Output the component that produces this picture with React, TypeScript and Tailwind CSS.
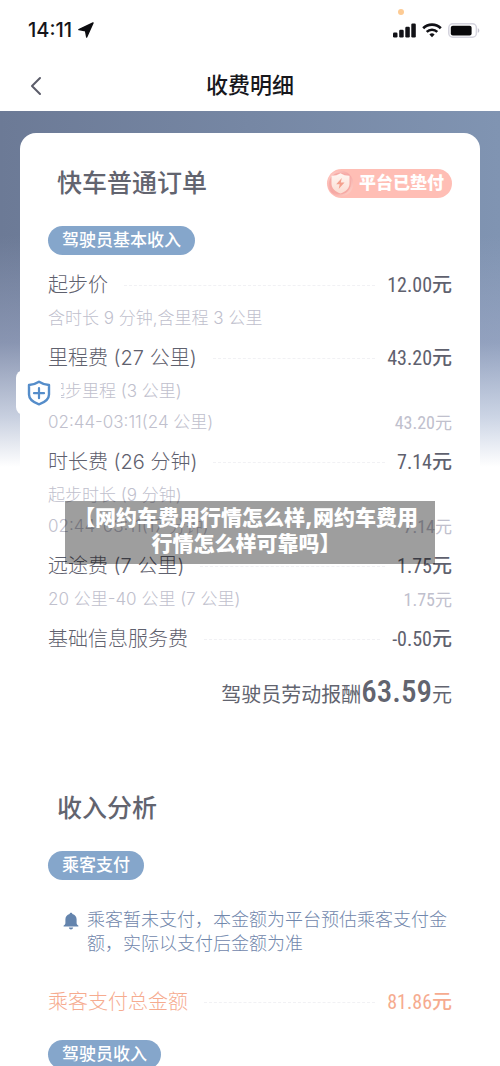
import { ChevronLeft } from "lucide-react";

interface FeeItem {
  label: string;
  amount: string;
  details: { text: string; amount?: string }[];
}

const FEES: FeeItem[] = [
  {
    label: "起步价",
    amount: "12.00",
    details: [{ text: "含时长 9 分钟,含里程 3 公里" }],
  },
  {
    label: "里程费 (27 公里)",
    amount: "43.20",
    details: [
      { text: "起步里程 (3 公里)" },
      { text: "02:44-03:11(24 公里)", amount: "43.20" },
    ],
  },
  {
    label: "时长费 (26 分钟)",
    amount: "7.14",
    details: [
      { text: "起步时长 (9 分钟)" },
      { text: "02:44-03:11(17 分钟)", amount: "7.14" },
    ],
  },
  {
    label: "远途费 (7 公里)",
    amount: "1.75",
    details: [{ text: "20 公里-40 公里 (7 公里)", amount: "1.75" }],
  },
  { label: "基础信息服务费", amount: "-0.50", details: [] },
];

function StatusBar() {
  return (
    <div className="flex h-[60px] items-center justify-between pl-7 pr-5">
      <div className="flex items-center gap-[6px]">
        <span className="text-[20px] font-medium leading-6 text-[#15151a]">14:11</span>
        <svg viewBox="0 0 16 16" className="h-4 w-4" fill="#0c0c10" stroke="#0c0c10" aria-hidden="true">
          <path d="M15 1 .9 7.600l6.600 1.100L8.700 15Z" strokeWidth="1.400" strokeLinejoin="round" />
        </svg>
      </div>
      <div className="relative flex items-center gap-[6px]">
        <span className="absolute -top-[14px] left-[5px] h-[6px] w-[6px] rounded-full bg-[#fdcb94]" />
        <svg viewBox="0 0 23 15" className="h-[15px] w-[23px]" fill="#111116" aria-hidden="true">
          <rect x="0" y="9.500" width="4.500" height="5" rx="1.200" />
          <rect x="6.200" y="6.700" width="4.500" height="7.800" rx="1.200" />
          <rect x="12.300" y="3.800" width="4.500" height="10.700" rx="1.200" />
          <rect x="18.300" y=".5" width="4.500" height="14" rx="1.200" />
        </svg>
        <svg viewBox="0 0 20 15" className="h-[15px] w-[20px]" fill="none" stroke="#111116" aria-hidden="true">
          <path d="M1.200 5.200a12.500 12.500 0 0 1 17.600 0" strokeWidth="2.700" />
          <path d="M4.700 8.900a7.500 7.500 0 0 1 10.600 0" strokeWidth="2.500" />
          <path d="M10 14.200 7.400 11.600a3.700 3.700 0 0 1 5.200 0Z" fill="#111116" stroke="none" />
        </svg>
        <svg viewBox="0 0 32 15" className="h-[15px] w-8" aria-hidden="true">
          <rect x=".8" y=".8" width="27.600" height="13.400" rx="4" fill="#fff" stroke="#d4d3dd" strokeWidth="1.500" />
          <rect x="2.800" y="2.700" width="20.800" height="9.700" rx="2" fill="#08080a" />
          <path d="M29.800 5.200c2 .6 2 4 0 4.600Z" fill="#c5c4d0" />
        </svg>
      </div>
    </div>
  );
}

function Pill({ children }: { children: string }) {
  return (
    <h3 className="w-fit rounded-full bg-[#85a6cb] px-[14px] text-[17px] font-medium leading-[29px] text-white">
      {children}
    </h3>
  );
}

function Leader() {
  return <span className="ml-4 mr-3 flex-1 border-t border-dashed border-[#f1f1f4]" />;
}

function MainRow({ label, amount }: { label: string; amount: string }) {
  return (
    <div className="flex h-9 items-center text-[20px]">
      <span className="font-light">{label}</span>
      <Leader />
      <span>
        <span className="font-['Roboto_Condensed',Roboto,sans-serif]">{amount}</span>
        <span className="font-medium">元</span>
      </span>
    </div>
  );
}

function FeeGroup({ item }: { item: FeeItem }) {
  return (
    <li className="text-[#5f616e]">
      <MainRow label={item.label} amount={item.amount} />
      {item.details.map((detail) => (
        <div
          key={detail.text}
          className="flex h-[31px] items-center justify-between text-[17px] text-[#c0c0cd]"
        >
          <span className="font-light">{detail.text}</span>
          {detail.amount && (
            <span>
              <span className="font-['Roboto_Condensed',Roboto,sans-serif] text-[18px]">{detail.amount}</span>元
            </span>
          )}
        </div>
      ))}
    </li>
  );
}

function AdvanceBadge() {
  return (
    <div className="flex h-[29px] items-center gap-1 rounded-full bg-[#ffbeb5] pr-2">
      <svg viewBox="0 0 28 29" className="h-[29px] w-7" aria-hidden="true">
        <defs>
          <linearGradient id="badge-ring" x1="0" y1="0" x2="1" y2="1">
            <stop offset="0" stopColor="#ffd5ce" />
            <stop offset=".5" stopColor="#f5a6a4" />
            <stop offset="1" stopColor="#ffd9cf" />
          </linearGradient>
          <linearGradient id="badge-shield" x1="0" y1="0" x2="0" y2="1">
            <stop offset="0" stopColor="#fff6f2" />
            <stop offset="1" stopColor="#fbdcd2" />
          </linearGradient>
        </defs>
        <circle cx="13.500" cy="14.500" r="12.800" fill="url(#badge-ring)" />
        <circle cx="13" cy="14.500" r="10.800" fill="#f6aaa4" />
        <path
          d="M13.500 4.200c2.500 1.700 5.500 2.500 9 2.500v8c0 4.500-3.500 7.600-9 9.900-5.500-2.300-9-5.400-9-9.900v-8c3.500 0 6.500-.8 9-2.500Z"
          fill="url(#badge-shield)"
        />
        <path d="m14.800 9-5.600 6.200h3.500l-1 4.800 5.800-6.400h-3.700Z" fill="#f4a08d" />
      </svg>
      <span className="text-[17px] font-black leading-[29px] text-white">平台已垫付</span>
    </div>
  );
}

function BellIcon() {
  return (
    <svg viewBox="0 0 16 18" className="mt-1 h-[18px] w-4 shrink-0" fill="#6484ad" aria-hidden="true">
      <path d="M8 .7c.8 0 1.300.5 1.400 1.200 2.600.6 4.200 2.700 4.200 5.400v3.600c0 1 .6 1.900 1.600 2.700.4.4.3 1-.3 1H1.100c-.6 0-.7-.6-.3-1 1-.8 1.600-1.700 1.600-2.700V7.300c0-2.700 1.600-4.800 4.200-5.400C6.700 1.200 7.200.7 8 .7Z" />
      <path d="M5.800 15.600h4.400c-.3 1.200-1.100 1.900-2.200 1.900s-1.900-.7-2.200-1.900Z" />
    </svg>
  );
}

export default function App() {
  return (
    <div className="relative h-screen overflow-hidden bg-white font-[Inter,'Noto_Sans_CJK_SC',sans-serif]">
      <header>
        <StatusBar />
        <nav className="grid h-[51px] grid-cols-[1fr_auto_1fr] items-center px-5">
          <button type="button" aria-label="返回" className="w-fit">
            <ChevronLeft className="h-8 w-8 text-[#5b5c69]" strokeWidth={1.5} />
          </button>
          <h1 className="text-[22px] font-medium text-[#17171c]">收费明细</h1>
        </nav>
      </header>

      <div className="relative">
        <div className="absolute inset-x-0 top-0 h-[355px] bg-[linear-gradient(to_right,#6c7a96,#8094b2)]" />
        <div className="absolute inset-x-0 top-0 h-[356px] bg-[linear-gradient(to_bottom,transparent_35%,#a5afcc80_65%,#dfe5f2cc_86%,#fff_100%)]" />

        <main className="relative px-5 pt-[22px]">
          <div className="rounded-2xl bg-white px-7 pt-8">
            <section>
              <div className="flex items-center justify-between pl-[9px]">
                <h2 className="text-[25px] font-medium leading-9 text-[#62646f]">快车普通订单</h2>
                <AdvanceBadge />
              </div>
              <div className="mt-[25px]">
                <Pill>驾驶员基本收入</Pill>
              </div>
              <ul className="mt-3 flex flex-col gap-[6px]">
                {FEES.map((item) => (
                  <FeeGroup key={item.label} item={item} />
                ))}
              </ul>
              <p className="mt-[15px] flex items-baseline justify-end text-[20px] leading-10 text-[#62646f]">
                驾驶员劳动报酬
                <span className="font-['Roboto_Condensed',Roboto,sans-serif] text-[31px] font-medium">
                  63.59
                </span>
                元
              </p>
            </section>

            <section className="mt-[75px]">
              <h2 className="pl-[9px] text-[25px] font-medium leading-9 text-[#62646f]">收入分析</h2>
              <div className="mt-[25px]">
                <Pill>乘客支付</Pill>
              </div>
              <div className="mt-7 flex gap-2 pl-[15px]">
                <BellIcon />
                <p className="text-[18px] font-light leading-6 text-[#7187ac]">
                  乘客暂未支付，本金额为平台预估乘客支付金额，实际以支付后金额为准
                </p>
              </div>
              <div className="mt-7 text-[#f6ab8f]">
                <MainRow label="乘客支付总金额" amount="81.86" />
              </div>
              <div className="mt-5">
                <Pill>驾驶员收入</Pill>
              </div>
            </section>
          </div>
        </main>
      </div>

      <button
        type="button"
        aria-label="安全中心"
        className="absolute left-4 top-[370px] flex h-[45px] w-[45px] items-center justify-center rounded-l-lg bg-white"
      >
        <svg viewBox="0 0 24 26" className="h-[26px] w-6" fill="none" stroke="#558dca" aria-hidden="true">
          <path
            d="M12 1.800c3 2 6 3 10 3.200v9.500c0 4.800-4 7.800-10 9.800-6-2-10-5-10-9.800V5c4-.2 7-1.200 10-3.200Z"
            strokeWidth="2.400"
            strokeLinejoin="round"
          />
          <path d="M12 8.200v10M7 13.200h10" strokeWidth="2.200" strokeLinecap="round" />
        </svg>
      </button>

      <div className="absolute inset-x-[13%] top-[501px] bg-black/38 pb-[7px] pl-2 pr-4 pt-1">
        <p className="text-center text-[21px] font-black leading-[26px] text-white">
          【网约车费用行情怎么样,网约车费用行情怎么样可靠吗】
        </p>
      </div>
    </div>
  );
}
